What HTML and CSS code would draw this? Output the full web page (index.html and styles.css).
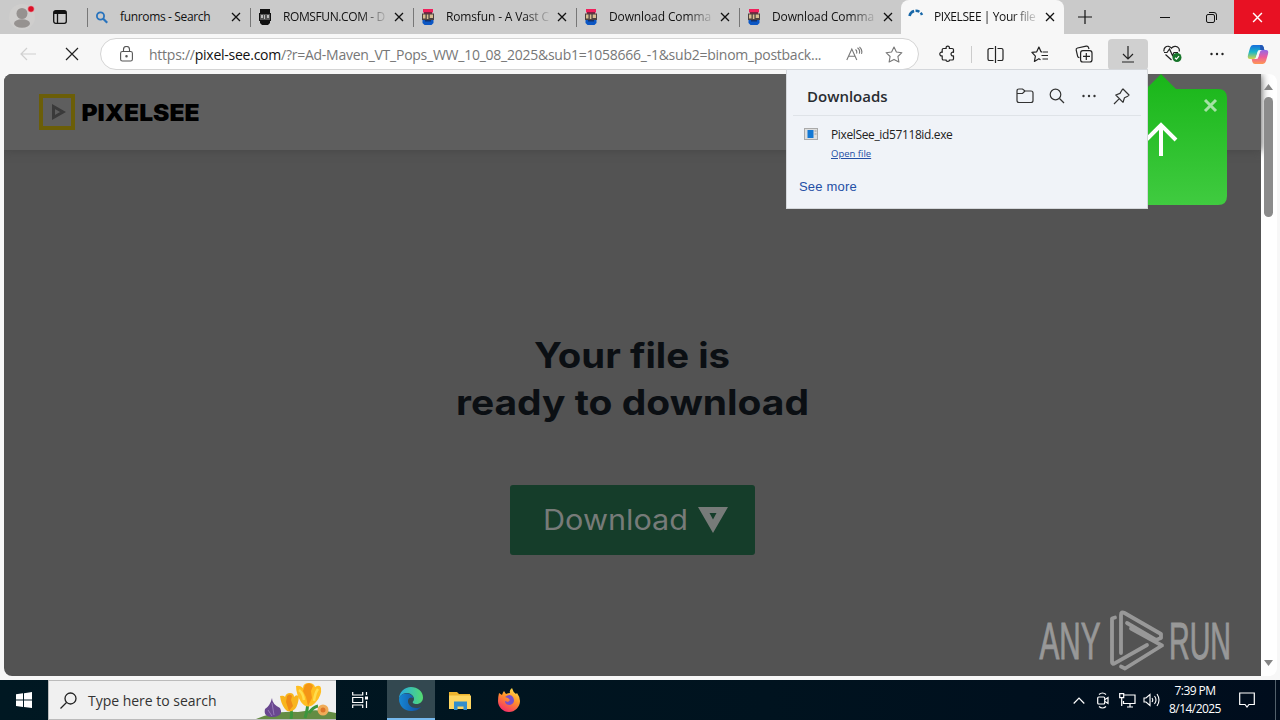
FILE: index.html
```html
<!DOCTYPE html>
<html lang="en">
<head>
<meta charset="utf-8">
<title>PIXELSEE | Your file is ready</title>
<link rel="stylesheet" href="styles.css">
</head>
<body>
<svg class="defs" width="0" height="0">
  <defs>
    <symbol id="x" viewBox="0 0 10 10"><path d="M1 1l8 8M9 1l-8 8" fill="none" stroke="currentColor" stroke-width="1.3"/></symbol>
    <symbol id="rom" viewBox="0 0 16 16">
      <path d="M3 0h10v3.500H3z" fill="#f0205c"/><path d="M4 3h8v2H4z" fill="#7c2340"/>
      <path d="M2 4.500h12v6.500H2z" fill="#4c4240"/><path d="M3 5.500h2.500v4H3zM6.800 5.500h1.600v4.500H6.800zM9.700 5.500H13v3.500H9.700z" fill="#d7bd91"/>
      <path d="M2.500 11h11v3l-2 2h-7l-2-2z" fill="#0b56c4"/><path d="M5 11h6v1.500H5z" fill="#12326d"/>
    </symbol>
  </defs>
</svg>
<div class="screen">
  <header class="tabstrip">
    <div class="profile">
      <svg width="28" height="28" viewBox="0 0 28 28"><circle cx="14" cy="14" r="13" fill="#cfcecd"/><circle cx="14" cy="10.500" r="5.500" fill="#969290"/><ellipse cx="14" cy="20.500" rx="8" ry="4.200" fill="#969290"/><circle cx="23" cy="6" r="3.300" fill="#db1027" stroke="#e8d4d4" stroke-width=".6"/></svg>
    </div>
    <div class="workspaces">
      <svg width="14" height="14" viewBox="0 0 14 14" fill="none" stroke="#111" stroke-width="1.300"><rect x=".7" y=".7" width="12.600" height="12.600" rx="2"/><path d="M1 2.500h12" stroke-width="3"/><path d="M4.500 4v9"/></svg>
    </div>
    <div class="tab">
      <svg class="fav" viewBox="0 0 16 16" fill="none" stroke="#2873bd" stroke-width="1.800"><circle cx="6.500" cy="7" r="3.600"/><path d="M9.200 9.700l4 4" stroke-width="2.200"/></svg>
      <span class="title t1">funroms - Search</span><svg class="close"><use href="#x"/></svg>
    </div>
    <div class="tab">
      <svg class="fav" viewBox="0 0 16 16"><path d="M3 0h10v4H3zM2 4h12v8H2zM3 12h10v2l-2 2H5l-2-2z" fill="#111"/><path d="M3 5h10v6H3z" fill="#555"/><path d="M4 6h2v3H4zM7 6h1v4H7zM10 6h2v3h-2z" fill="#bbb"/></svg>
      <span class="title fade t2">ROMSFUN.COM - D</span><svg class="close"><use href="#x"/></svg>
    </div>
    <div class="tab">
      <svg class="fav"><use href="#rom"/></svg>
      <span class="title fade t3">Romsfun - A Vast C</span><svg class="close"><use href="#x"/></svg>
    </div>
    <div class="tab">
      <svg class="fav"><use href="#rom"/></svg>
      <span class="title fade t4">Download Comma</span><svg class="close"><use href="#x"/></svg>
    </div>
    <div class="tab">
      <svg class="fav"><use href="#rom"/></svg>
      <span class="title fade t4">Download Comma</span><svg class="close"><use href="#x"/></svg>
    </div>
    <div class="tab active">
      <svg class="fav" viewBox="0 0 16 16" fill="none" stroke="#1767a8" stroke-width="2.500"><path d="M1.500 7A6.500 6.500 0 0 1 14 6" stroke-dasharray="7 1.500 4 1.500"/></svg>
      <span class="title fade t5">PIXELSEE | Your file</span><svg class="close"><use href="#x"/></svg>
    </div>
    <svg class="newtab" width="14" height="14" viewBox="0 0 14 14" stroke="#111" stroke-width="1.200"><path d="M7 0v14M0 7h14"/></svg>
    <div class="winbtns">
      <div><svg width="10" height="10" stroke="#111"><path d="M0 5.500h10"/></svg></div>
      <div><svg width="11" height="11" viewBox="0 0 11 11" fill="none" stroke="#111"><rect x=".5" y="2.500" width="8" height="8" rx="1.500"/><path d="M3 .5h5a2.500 2.500 0 0 1 2.500 2.500v5"/></svg></div>
      <div class="winclose"><svg width="11" height="11"><use href="#x"/></svg></div>
    </div>
  </header>

  <div class="toolbar">
    <div class="navbtn back"><svg width="16" height="14" viewBox="0 0 16 14" fill="none" stroke="#d0d0d0" stroke-width="1.200"><path d="M16 7H1M7 1L1 7l6 6"/></svg></div>
    <div class="navbtn stop"><svg width="14" height="14" viewBox="0 0 14 14" stroke="#222" stroke-width="1.200"><path d="M1 1l12 12M13 1L1 13"/></svg></div>
    <div class="address">
      <svg class="lock" width="13" height="16" viewBox="0 0 13 16" fill="none" stroke="#555" stroke-width="1.100"><rect x=".6" y="5.500" width="11.800" height="9.500" rx="1.800"/><path d="M3.500 5.500V3.500a3 3 0 0 1 6 0v2"/><circle cx="6.500" cy="10.200" r=".7" fill="#555"/></svg>
      <span class="url">https://<b>pixel-see.com</b>/?r=Ad-Maven_VT_Pops_WW_10_08_2025&amp;sub1=1058666_-1&amp;sub2=binom_postback...</span>
      <svg class="aloud" width="17" height="16" viewBox="0 0 17 16" fill="none" stroke="#777" stroke-width="1.100"><path d="M.8 14L5.800 3l5 11M2.600 10.300h6.500M9.500 3.500q2 1.500 1 4M11.500 1.700q3 2 1.800 6M13.500 .8q3.300 3 2 7"/></svg>
      <svg class="star" width="18" height="17" viewBox="0 0 18 17" fill="none" stroke="#777" stroke-width="1.100" stroke-linejoin="round"><path d="M9 1l2.400 5 5.500.7-4 3.800 1 5.500L9 13.400 4.100 16l1-5.500-4-3.800 5.500-.7z"/></svg>
    </div>
    <div class="tools">
      <div class="tool"><svg width="18" height="18" viewBox="0 0 18 18" fill="none" stroke="#222" stroke-width="1.200" stroke-linejoin="round"><path d="M4.500 3.500h2.700C6.300 .2 11.200.2 10.300 3.500h2.900q1.300 0 1.300 1.300v2.500c-3.300-.8-3.300 4.300 0 3.500v2.900q0 1.300-1.300 1.300h-2.900c.9 1.800-4 1.800-3.100 0H4.500q-1.300 0-1.300-1.300v-2.900C0 11.600 0 6.500 3.200 7.300V4.800q0-1.300 1.300-1.300z"/></svg></div>
      <div class="tool"><svg width="17" height="17" viewBox="0 0 17 17" fill="none" stroke="#222" stroke-width="1.200"><path d="M8.500 0v17M6.500 2.500H2.600A1.600 1.600 0 0 0 1 4.100v8.800a1.600 1.600 0 0 0 1.600 1.600h3.900M10.500 2.500h3.900A1.600 1.600 0 0 1 16 4.100v8.800a1.600 1.600 0 0 1-1.600 1.600h-3.900"/></svg></div>
      <div class="tool"><svg width="18" height="17" viewBox="0 0 18 17" fill="none" stroke="#222" stroke-width="1.200" stroke-linejoin="round"><path d="M11 5.800H10L7.900 1 5.700 5.800.9 6.400l3.500 3.700-1 5.300 4.500-2.700 1.600 1M11.500 6H17M10.500 9.500H17M11.500 13H17"/></svg></div>
      <div class="tool"><svg width="18" height="18" viewBox="0 0 18 18" fill="none" stroke="#222" stroke-width="1.200"><rect x="5.600" y="5.600" width="11.400" height="11.400" rx="2.300"/><path d="M11.300 8v7M8 11.400h7M14 4L13.500 2.500Q13 .8 11.200 1.200L2.500 3Q.8 3.400 1.200 5.200l1.400 6Q3 12.500 4.500 12.700"/></svg></div>
      <div class="tool pressed"><svg width="14" height="17" viewBox="0 0 14 17" fill="none" stroke="#222" stroke-width="1.200"><path d="M7 0v13M2 8l5 5 5-5M1 16h12"/></svg></div>
      <div class="tool"><svg width="20" height="18" viewBox="0 0 20 18" fill="none" stroke="#222" stroke-width="1.200"><path d="M1 6.500C.4 3 3 1 5.500 1.300c1.500.2 2.300 1 3 1.900 1-1.400 2.700-2.100 4.300-1.800 2.700.4 4.100 2.900 3.300 5.100M2.500 9.500L8.500 15M1 7.500h3L6.500 4l3 6.500L11 7.500h4"/><circle cx="14" cy="12.500" r="4.500" fill="#17752a" stroke="none"/><path d="M12 12.800l1.400 1.300 2.600-2.900" stroke="#fff"/></svg></div>
      <div class="tool"><svg width="14" height="4" fill="#222"><circle cx="1.500" cy="2" r="1.200"/><circle cx="7" cy="2" r="1.200"/><circle cx="12.500" cy="2" r="1.200"/></svg></div>
      <div class="tool"><svg width="22" height="21" viewBox="0 0 22 21"><defs><linearGradient id="cp1" x2="0" y2="1"><stop stop-color="#176ddd"/><stop offset=".5" stop-color="#19b6c8"/><stop offset="1" stop-color="#d5d54a"/></linearGradient><linearGradient id="cp2" x2="0" y2="1"><stop stop-color="#9268e8"/><stop offset=".5" stop-color="#ec5b9e"/><stop offset="1" stop-color="#ff9852"/></linearGradient></defs><path d="M6 1h8q2 0 2.600 2l.7 3h-4q-2 0-2.600 2l-1.500 5q-.7 2-2.700 2H3q-3 0-2-4L3 4q.8-3 3-3z" fill="url(#cp1)"/><path d="M16 20H8q-2 0-2.600-2l-.7-3h4q2 0 2.600-2l1.500-5q.7-2 2.700-2H19q3 0 2 4l-2 7q-.8 3-3 3z" fill="url(#cp2)"/><path d="M13 1h1q2 0 2.600 2l.7 3h-4z" fill="#2457b5"/><path d="M11 6.500h2.300L10.800 14.500H8.500z" fill="#f7f7f7"/></svg></div>
    </div>
  </div>

  <main class="viewport">
    <div class="page">
      <div class="sitehead">
        <svg width="161" height="36" viewBox="0 0 161 36"><rect x="2" y="2" width="32" height="32" fill="none" stroke="#6b5e08" stroke-width="4"/><path d="M14.500 12.500v11l9.500-5.500z" fill="none" stroke="#3a3a3a" stroke-width="3"/><text class="brand" x="42.500" y="27" textLength="118" lengthAdjust="spacingAndGlyphs">PIXELSEE</text></svg>
      </div>
      <div class="hero">
        <svg width="354" height="96" viewBox="0 0 354 96"><g class="headline"><text x="78" y="33" textLength="196" lengthAdjust="spacingAndGlyphs">Your file is</text><text x="0" y="80" textLength="353" lengthAdjust="spacingAndGlyphs">ready to download</text></g></svg>
        <div class="download"><svg width="188" height="38" viewBox="0 0 188 38"><text class="dl" x="1" y="29" textLength="145" lengthAdjust="spacingAndGlyphs">Download</text><path d="M156 6h30l-15 26zM167.500 12l3.500 6.500 3.500-6.500z" fill="#777b79" fill-rule="evenodd"/></svg></div>
      </div>
    </div>
    <div class="scroll">
      <svg width="9" height="6"><path d="M0 6h9L4.500 0z" fill="#858585"/></svg>
      <div class="thumb"></div>
      <svg width="9" height="6"><path d="M0 0h9L4.500 6z" fill="#858585"/></svg>
    </div>
  </main>

  <svg class="callout" width="120" height="136" viewBox="0 0 120 136"><defs><linearGradient id="green" x2="0" y2="1"><stop stop-color="#19b619"/><stop offset="1" stop-color="#40cb40"/></linearGradient></defs><path d="M0 15h39L54 0l15 15h42q9 0 9 9v98q0 9-9 9H0z" fill="url(#green)"/><path d="M54 82V53M39 66l15-15 15 15" fill="none" stroke="#fff" stroke-width="4"/><path d="M98 26l11 11M109 26L98 37" stroke="#a4e2a4" stroke-width="3"/></svg>

  <section class="downloads">
    <div class="dhead"><h2>Downloads</h2>
      <div class="dicons">
        <svg width="18" height="16" viewBox="0 0 18 16" fill="none" stroke="#333" stroke-width="1.200"><path d="M1 5.500V3q0-2 2-2h3.500L9 3h6q2 0 2 2v7.500q0 2-2 2H3q-2 0-2-2zM1 5.500h5.500L9 3"/></svg>
        <svg width="16" height="16" viewBox="0 0 16 16" fill="none" stroke="#333" stroke-width="1.200"><circle cx="6.500" cy="6.500" r="5.300"/><path d="M10.500 10.500L15 15"/></svg>
        <svg width="14" height="4" fill="#333"><circle cx="1.500" cy="2" r="1.200"/><circle cx="7" cy="2" r="1.200"/><circle cx="12.500" cy="2" r="1.200"/></svg>
        <svg width="17" height="17" viewBox="0 0 17 17" fill="none" stroke="#333" stroke-width="1.200" stroke-linejoin="round"><path d="M10 1l6 6-1.200 1.200-3.300 1.500L10 14.300 2.800 7 7 5.400 9 2zM6.300 10.700L1 16"/></svg>
      </div>
    </div>
    <div class="ditem">
      <svg width="14" height="12" viewBox="0 0 14 12"><rect x=".5" y=".5" width="13" height="11" fill="#dedede" stroke="#aaa"/><path d="M3.500 2h6v8h-6z" fill="#1478d4"/><path d="M10.500 3h2M10.500 6h2" stroke="#999"/></svg>
      <div><div class="fname">PixelSee_id57118id.exe</div><a class="open">Open file</a></div>
    </div>
    <a class="more">See more</a>
  </section>

  <svg class="watermark" width="210" height="68" viewBox="0 0 210 68"><g class="wm"><text x="1.500" y="50.500" textLength="61" lengthAdjust="spacingAndGlyphs">ANY</text><text x="131" y="50.500" textLength="62" lengthAdjust="spacingAndGlyphs">RUN</text></g><g fill="none" stroke="#989898" stroke-width="3.800" stroke-linejoin="round" stroke-linecap="round"><path d="M77 9.500l-3 1V54q0 3 3 1.200L109 37"/><path d="M83 45V7q0-4 3.500-2L123 26v4l-5 2-29-17"/><path d="M93 20.500l31 17L87 60.500l-4-2"/></g></svg>

  <footer class="taskbar">
    <div class="start"><svg width="16" height="16" fill="#fff"><path d="M0 2.300L7 1.300V7.600H0zM8 1.200L16 0V7.600H8zM0 8.600H7V15L0 14zM8 8.600H16V16L8 15z"/></svg></div>
    <div class="search">
      <svg width="17" height="17" viewBox="0 0 17 17" fill="none" stroke="#222" stroke-width="1.300"><circle cx="10.500" cy="6.500" r="5.500"/><path d="M6.500 10.500L.5 16.500"/></svg>
      <span>Type here to search</span>
      <svg class="flowers" width="80" height="38" viewBox="0 0 80 38"><path d="M0 38q20-9 42-7 20-4 38 1v6z" fill="#648c43"/><path d="M35 38q2-11-4-17M49 37q3-9 3-20M53 32q4-6 9-7" fill="none" stroke="#3c963d" stroke-width="3"/><path d="M16 17q0 6 8 10 4 8-7 9-10 0-8-8 5-3 7-11z" fill="#69478f"/><path d="M16 22l2 12M12 29l4 6" stroke="#9678b8"/><path d="M24 15q4-1 5 1 1-4 5-4 4 0 4 4 2-3 5-1-1 10-4 13-6 5-10 0-4-5-5-13z" fill="#f8b51d"/><path d="M31 15q3-3 5 0l-1 4 2 6-4 5-3-9z" fill="#ef8b16"/><path d="M40 5q4-1 7 2 0-5 6-5 5 0 6 4 5-3 6 1 1 7-5 14-8 9-15 0-5-8-5-16z" fill="#ffbe21"/><path d="M49 4q5-4 8 1l-2 5 1 7-4 8-2-9-3-6z" fill="#f49516"/><path d="M43 9q4 3 5 10M62 8q-3 4-4 12" fill="none" stroke="#ffdd4d" stroke-width="2.500"/><circle cx="67" cy="29" r="5.500" fill="#f0ac58"/><circle cx="67" cy="29" r="2.500" fill="#dc7629"/></svg>
    </div>
    <div class="app"><svg width="17" height="16" viewBox="0 0 17 16" fill="none" stroke="#fff" stroke-width="1.200"><path d="M.7 0v3h10V0M.7 16v-3h10v3M.7 5.500h10v5H.7zM14.500 0v3M14.500 9v7"/><path d="M13 4.500h3v3h-3z" fill="#fff" stroke="none"/></svg></div>
    <div class="app edge"><svg width="24" height="24" viewBox="0 0 24 24"><defs><linearGradient id="e1"><stop stop-color="#25a9e4"/><stop offset="1" stop-color="#54dc70"/></linearGradient><linearGradient id="e2"><stop stop-color="#1687d4"/><stop offset="1" stop-color="#124b9d"/></linearGradient></defs><path d="M0 12C0 5 5.500 0 12 0s12 4.500 12 10.500c0 4-3 6.500-6.500 6.500-3 0-4.500-1.400-3.500-2.500 1-1 1-2.500 1-3C14.500 8 11 6 7.500 6 4 6 1 8.500 0 12z" fill="url(#e1)"/><path d="M0 12c1-4 4-5.500 7-5.500 4 0 7 2 7.500 5-2-2-5-1-5.500 2-.5 4 3.500 8 9 7.500 1.500 0 3-.8 4-1.300C20 23 16 24 12 24 5 24 0 18.500 0 12z" fill="url(#e2)"/></svg></div>
    <div class="app"><svg width="22" height="19" viewBox="0 0 22 19"><path d="M0 1h8l2 2h11v15H0z" fill="#eeb42e"/><path d="M0 4.500h22V18H0z" fill="#ffd661"/><path d="M5 19v-8.500h13V19h-3.500v-3.500h-6V19z" fill="#338ecb"/></svg></div>
    <div class="app"><svg width="24" height="24" viewBox="0 0 24 24"><defs><linearGradient id="ff" x1=".8" y1="0" x2=".3" y2="1"><stop stop-color="#ffe44c"/><stop offset=".45" stop-color="#ff942a"/><stop offset="1" stop-color="#f52b6a"/></linearGradient></defs><path d="M2 5l3 2Q6 4 7 3l2 3q2-1 4-1-1-3 2-5 1 4 4 6l1-1q3 4 3 8c0 6-5 11-11 11S1 19 1 13q0-4 1-8z" fill="url(#ff)"/><path d="M8 9q5-4 8 0 3 6-3 8-5 0-5-4l3 1 2-2-2-2z" fill="#7650cb"/></svg></div>
    <div class="tray">
      <svg width="12" height="7" viewBox="0 0 12 7" fill="none" stroke="#fff" stroke-width="1.200"><path d="M.7 6.500L6 1l5.300 5.500"/></svg>
      <svg width="12" height="17" viewBox="0 0 12 17" fill="none" stroke="#fff" stroke-width="1.200"><rect x=".7" y="5" width="7" height="7" rx="1"/><path d="M8 7.500l3-2v6l-3-2M2 2.500q3.500-3 7 0M2 14.500q3.500 3 7 0"/></svg>
      <svg width="17" height="15" viewBox="0 0 17 15" fill="none" stroke="#fff" stroke-width="1.200"><path d="M5 2h11v8.500H4.500V8M8 14h6M11 10.500V14M.7.700h4v4h-4zM2.700 5v8"/></svg>
      <svg width="17" height="14" viewBox="0 0 17 14" fill="none" stroke="#fff" stroke-width="1.100"><path d="M1 5h2l4-3.500v11L3 9H1zM9 5q1.500 2 0 4M11.500 3q3 4 0 8M14 1q4 6 0 12"/></svg>
    </div>
    <div class="clock"><div>7:39 PM</div><div>8/14/2025</div></div>
    <svg class="note" width="16" height="17" viewBox="0 0 16 17" fill="none" stroke="#fff" stroke-width="1.200"><path d="M.7 1h14.600v11.500H10L8 15l-2-2.500H.7z"/></svg>
    <div class="peek"></div>
  </footer>
</div>
</body>
</html>
```
FILE: styles.css
```css
* { box-sizing: border-box; }
body { margin: 0; overflow: hidden; font-family: "Open Sans", "Noto Sans", sans-serif; color: #222; }
svg { display: block; flex: none; }
.defs { position: absolute; }
.screen { position: relative; width: 1280px; height: 720px; display: flex; flex-direction: column; background: #f7f7f7; overflow: hidden; }

.tabstrip { display: flex; height: 34px; flex: none; background: #cacaca; }
.profile { width: 44px; padding: 3px 0 0 8px; }
.workspaces { width: 43px; padding: 10px 0 0 9px; }
.tab { width: 163px; height: 34px; display: flex; align-items: center; padding-left: 7px; font-size: 12px; color: #111; background: linear-gradient(#777, #777) 0 8px / 1px 19px no-repeat; }
.fav { width: 16px; height: 16px; margin-right: 10px; }
.title { width: 105px; white-space: nowrap; line-height: 18px; margin-right: 5.500px; }
.fade { color: transparent; background: linear-gradient(90deg, #111 78px, rgba(17, 17, 17, .1) 103px); -webkit-background-clip: text; background-clip: text; }
.t1 { letter-spacing: -.35px; }
.t2 { letter-spacing: -.4px; }
.t3 { letter-spacing: -.15px; }
.t4 { letter-spacing: -.12px; }
.t5 { letter-spacing: -.4px; }
.close { width: 10px; height: 10px; }
.tab.active { background: #f7f7f7; border-radius: 8px 8px 0 0; margin-left: -1px; }
.newtab { margin: 10px 0 0 14px; }
.winbtns { display: flex; margin-left: auto; }
.winbtns div { width: 46px; display: flex; align-items: center; justify-content: center; }
.winbtns .winclose { background: #e81123; color: #fff; }

.toolbar { display: flex; align-items: center; height: 40px; flex: none; }
.navbtn { display: flex; justify-content: center; }
.back { width: 40px; margin-left: 8px; }
.stop { width: 48px; }
.address { display: flex; align-items: center; width: 819px; height: 32px; margin-left: 4px; border: 1px solid #d4d4d4; border-radius: 16px; background: #fff; padding-left: 19px; }
.url { width: 700px; margin-left: 16px; font-size: 14px; letter-spacing: -.25px; color: #777; white-space: nowrap; }
.url b { font-weight: 400; color: #111; }
.aloud { margin-left: -3px; }
.star { margin-left: 22px; }
.tools { display: flex; margin-left: 9px; }
.tool { width: 44px; height: 31px; display: flex; align-items: center; justify-content: center; }
.tool:first-child { width: 39px; }
.tool:nth-child(2) { width: 47px; border-left: 1px solid #d4d4d4; border-image: linear-gradient(transparent 25%, #ccc 25% 75%, transparent 75%) 1; margin-left: 4px; }
.tool:nth-child(3) { width: 44px; }
.tool:nth-child(4) { width: 44px; }
.tool.pressed { width: 40px; margin-left: 2px; background: #d0d0d0; border-radius: 4px; }
.tool:nth-child(6) { width: 49px; }
.tool:nth-child(7) { width: 39px; }

.viewport { display: flex; width: 1273px; height: 602px; margin-left: 4px; flex: none; border-radius: 8px; overflow: hidden; background: #fff; }
.page { width: 1257px; background: #535353; }
.sitehead { height: 76px; padding: 20px 0 0 35px; background: #5e5e5e; box-shadow: 0 1px 8px #484848; }
.brand { font: 900 23px Inter, sans-serif; fill: #000; }
.hero { display: flex; flex-direction: column; align-items: center; padding-top: 185px; }
.headline { font: 700 35px Inter, sans-serif; fill: #0b0f13; }
.download { width: 245px; height: 70px; margin-top: 54px; display: flex; align-items: center; padding-left: 32px; background: #153d2a; border-radius: 3px; }
.dl { font: 400 28px Inter, sans-serif; fill: #777b79; }
.scroll { width: 15px; display: flex; flex-direction: column; align-items: center; padding: 10px 0 10px; }
.thumb { width: 9px; height: 120px; margin: 7px 0 auto; border-radius: 5px; background: #8b8b8b; }

.callout { position: absolute; left: 1107px; top: 74px; }
.downloads { position: absolute; left: 786px; top: 69px; width: 362px; height: 140px; background: #f0f3f8; border: 1px solid #d4d7db; }
.dhead { display: flex; align-items: center; height: 46px; margin: 0 6px; padding: 7px 11px 0 14px; border-bottom: 1px solid #dfe3e8; }
h2 { margin: 0; font-size: 15px; font-weight: 600; color: #292c31; }
.dicons { display: flex; align-items: center; gap: 16.500px; margin-left: auto; }
.dicons svg:nth-child(3) { margin: 0 1px 0 0; }
.dicons svg:first-child { margin-right: -1px; }
.ditem { display: flex; gap: 13px; padding: 12px 0 0 17px; }
.fname { font-size: 12px; line-height: 14px; letter-spacing: -.37px; }
.open { display: block; font-size: 9.500px; line-height: 13px; margin-top: 5px; color: #244fa5; text-decoration: underline; }
.more { display: block; margin: 19px 0 0 12px; font: 13px/16px "Liberation Sans", sans-serif; color: #244fa5; letter-spacing: .2px; }
.watermark { position: absolute; left: 1038px; top: 608px; }
.wm { font: 51px "Liberation Sans", sans-serif; fill: #989898; stroke: #989898; stroke-width: 1px; }

.taskbar { display: flex; align-items: center; height: 40px; margin-top: 4px; flex: none; color: #fff; background: linear-gradient(90deg, #001822, #00131f 60%, #000d1d); }
.start { width: 48px; padding-left: 16px; }
.search { display: flex; align-items: center; width: 288px; height: 40px; padding-left: 11px; background: #f0f0f0; border: 1px solid #bbb; border-right: 0; color: #333; font-size: 14px; }
.search span { margin-left: 11px; width: 149px; white-space: nowrap; letter-spacing: -.02px; }
.flowers { margin-left: 20px; }
.app { width: 49px; height: 40px; display: flex; align-items: center; justify-content: center; }
.app.edge { background: #334850; border-bottom: 2px solid #76b9ed; margin-left: 2px; width: 48px; }
.tray { display: flex; align-items: center; gap: 11px; margin-left: auto; }
.tray svg:nth-child(2) { margin-left: 1px; }
.tray svg:nth-child(3) { margin-left: -1px; }
.tray svg:nth-child(4) { margin-left: -4px; }
.clock { width: 70px; text-align: center; font-size: 12px; line-height: 18px; letter-spacing: -.55px; }
.note { margin-left: 9px; }
.peek { width: 5px; height: 40px; margin-left: 20px; border-left: 1px solid #52606b; }
```
